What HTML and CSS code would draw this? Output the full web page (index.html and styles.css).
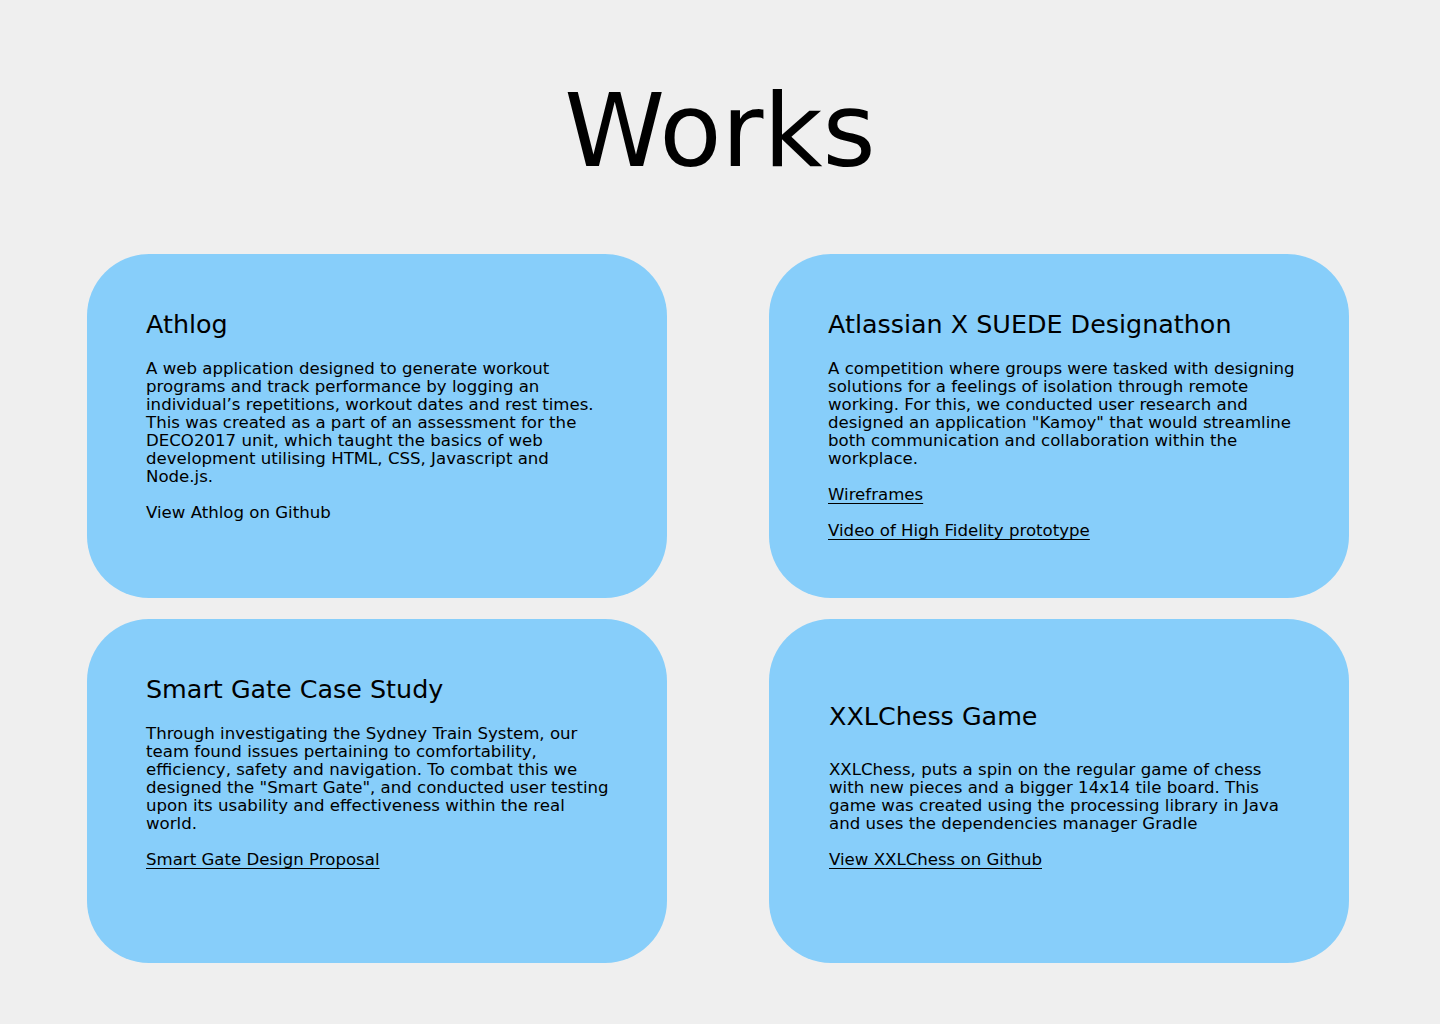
FILE: index.html
```html
<!DOCTYPE html>
<html lang="en">
<head>
<meta charset="utf-8">
<title>Works</title>
<link rel="stylesheet" href="styles.css">
</head>
<body>
<main class="page">
  <h1 class="page-title">Works</h1>
  <section class="grid">
    <article class="card">
      <h2 class="card-title">Athlog</h2>
      <p class="card-text">A web application designed to generate workout<br>programs and track performance by logging an<br>individual’s repetitions, workout dates and rest times.<br>This was created as a part of an assessment for the<br>DECO2017 unit, which taught the basics of web<br>development utilising HTML, CSS, Javascript and<br>Node.js.</p>
      <p class="card-text">View Athlog on Github</p>
    </article>
    <article class="card">
      <h2 class="card-title">Atlassian X SUEDE Designathon</h2>
      <p class="card-text">A competition where groups were tasked with designing<br>solutions for a feelings of isolation through remote<br>working. For this, we conducted user research and<br>designed an application "Kamoy" that would streamline<br>both communication and collaboration within the<br>workplace.</p>
      <p class="card-text"><a class="card-link" href="#">Wireframes</a></p>
      <p class="card-text"><a class="card-link" href="#">Video of High Fidelity prototype</a></p>
    </article>
    <article class="card">
      <h2 class="card-title">Smart Gate Case Study</h2>
      <p class="card-text">Through investigating the Sydney Train System, our<br>team found issues pertaining to comfortability,<br>efficiency, safety and navigation. To combat this we<br>designed the "Smart Gate", and conducted user testing<br>upon its usability and effectiveness within the real<br>world.</p>
      <p class="card-text"><a class="card-link" href="#">Smart Gate Design Proposal</a></p>
    </article>
    <article class="card card-offset">
      <h2 class="card-title">XXLChess Game</h2>
      <p class="card-text">XXLChess, puts a spin on the regular game of chess<br>with new pieces and a bigger 14x14 tile board. This<br>game was created using the processing library in Java<br>and uses the dependencies manager Gradle</p>
      <p class="card-text"><a class="card-link" href="#">View XXLChess on Github</a></p>
    </article>
  </section>
</main>
</body>
</html>
```
FILE: styles.css
```css
html, body {
  margin: 0;
  padding: 0;
  background: #efefef;
}

body {
  font-family: "DejaVu Sans", "Noto Sans", sans-serif;
  color: #000;
}

.page {
  width: 1440px;
  height: 1024px;
  box-sizing: border-box;
  padding-top: 76px;
}

.page-title {
  margin: 0;
  text-align: center;
  font-size: 102px;
  line-height: 110px;
  font-weight: 400;
  letter-spacing: 0;
}

.grid {
  display: grid;
  grid-template-columns: 580px 580px;
  grid-auto-rows: 344px;
  column-gap: 102px;
  row-gap: 21px;
  padding-left: 87px;
  margin-top: 68px;
}

.card {
  background: #87cefa;
  border-radius: 62px;
  padding: 55px 40px 0 59px;
  box-sizing: border-box;
}

.card-title {
  margin: 0 0 21px;
  font-size: 25.4px;
  line-height: 30px;
  font-weight: 400;
}

.card-text {
  margin: 0 0 18px;
  font-size: 16.6px;
  line-height: 18px;
  white-space: nowrap;
}

.card-link {
  color: #000;
  text-decoration: underline;
  text-underline-offset: 3px;
}

.card-offset {
  padding-top: 82px;
  padding-left: 60px;
}

.card-offset .card-title {
  margin-bottom: 30px;
}
```
